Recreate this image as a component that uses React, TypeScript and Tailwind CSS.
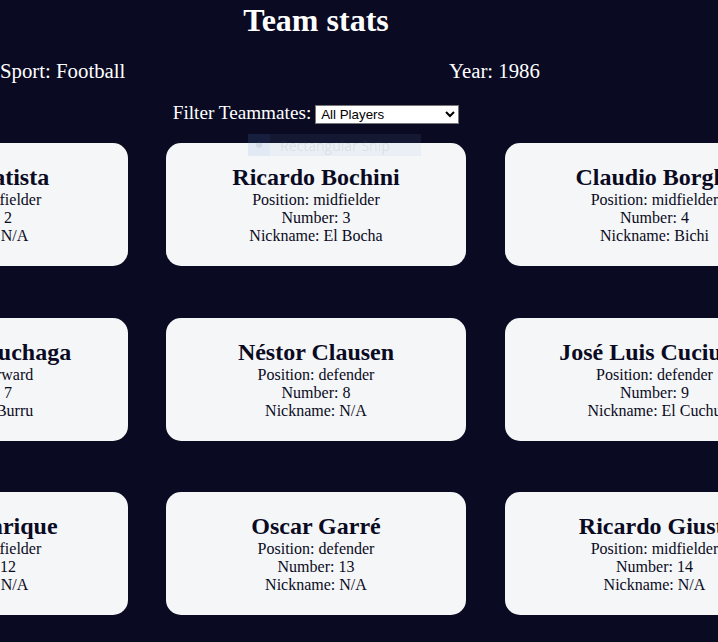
import React from "react";

type Player = {
  name: string;
  position: string;
  number: number;
  nickname: string;
};

const players: Player[] = [
  { name: "Sergio Almirón", position: "forward", number: 1, nickname: "N/A" },
  { name: "Sergio Batista", position: "midfielder", number: 2, nickname: "N/A" },
  { name: "Ricardo Bochini", position: "midfielder", number: 3, nickname: "El Bocha" },
  { name: "Claudio Borghi", position: "midfielder", number: 4, nickname: "Bichi" },
  { name: "José Luis Brown", position: "defender", number: 5, nickname: "Tata" },
  { name: "Daniel Passarella", position: "defender", number: 6, nickname: "El Gran Capitán" },
  { name: "Jorge Burruchaga", position: "forward", number: 7, nickname: "Burru" },
  { name: "Néstor Clausen", position: "defender", number: 8, nickname: "N/A" },
  { name: "José Luis Cuciuffo", position: "defender", number: 9, nickname: "El Cuchu" },
  { name: "Diego Maradona", position: "midfielder", number: 10, nickname: "El Pibe de Oro" },
  { name: "Jorge Valdano", position: "forward", number: 11, nickname: "N/A" },
  { name: "Héctor Enrique", position: "midfielder", number: 12, nickname: "N/A" },
  { name: "Oscar Garré", position: "defender", number: 13, nickname: "N/A" },
  { name: "Ricardo Giusti", position: "midfielder", number: 14, nickname: "N/A" },
  { name: "Luis Islas", position: "goalkeeper", number: 15, nickname: "El loco" },
];

const PlayerCard = ({ player }: { player: Player }) => (
  <div className="w-[300px] h-[123px] rounded-[15px] bg-[#f5f6f7] text-[#0a0a23] text-center pt-[21px] whitespace-nowrap overflow-hidden leading-[normal]">
    <h2 className="text-[24px] font-bold">{player.name}</h2>
    <p className="text-[16px]">Position: {player.position}</p>
    <p className="text-[16px]">Number: {player.number}</p>
    <p className="text-[16px]">Nickname: {player.nickname}</p>
  </div>
);

export default function App() {
  return (
    <div className="relative w-[718px] h-[642px] overflow-hidden bg-[#0a0a23] text-white font-['Liberation_Serif',serif] leading-[normal]">
      <div className="w-[632px]">
        <h1 className="pt-[2px] text-center text-[32px] font-bold">Team stats</h1>

        <div className="mt-[20px] grid grid-cols-[449px_auto] text-[20.8px]">
          <p>Sport: Football</p>
          <p>Year: 1986</p>
        </div>

        <div className="mt-[19px] flex items-baseline justify-center gap-1 text-[19.2px]">
          <label htmlFor="players">Filter Teammates:</label>
          <select
            id="players"
            className="w-[144px] h-[19px] bg-white text-black border border-[#767676] text-[13.33px] font-['Liberation_Sans',Arial,sans-serif] pl-[1px]"
            defaultValue="all"
          >
            <option value="all">All Players</option>
            <option value="nickname">Nicknamed Players</option>
            <option value="forward">Position Forward</option>
            <option value="midfielder">Position Midfielder</option>
            <option value="defender">Position Defender</option>
            <option value="goalkeeper">Position Goalkeeper</option>
          </select>
        </div>

        <div className="mt-[19px] flex justify-center">
          <div className="grid shrink-0 grid-cols-[repeat(5,300px)] gap-x-[38.5px] gap-y-[51.5px]">
            {players.map((p) => (
              <PlayerCard key={p.number} player={p} />
            ))}
          </div>
        </div>
      </div>

      {/* screen snip hint left over in the capture */}
      <div className="absolute left-[248px] top-[134px] flex h-[22px] w-[173px] items-center bg-[rgba(128,175,235,0.085)] font-['Open_Sans',sans-serif]">
        <div className="flex h-full w-[22px] items-center justify-center bg-[rgba(90,150,240,0.06)]">
          <span className="block h-[6px] w-[6px] rounded-full bg-[rgba(120,130,150,0.15)]" />
        </div>
        <span className="ml-[10px] text-[14px] text-[rgba(110,115,130,0.14)]">Rectangular Snip</span>
      </div>
    </div>
  );
}
